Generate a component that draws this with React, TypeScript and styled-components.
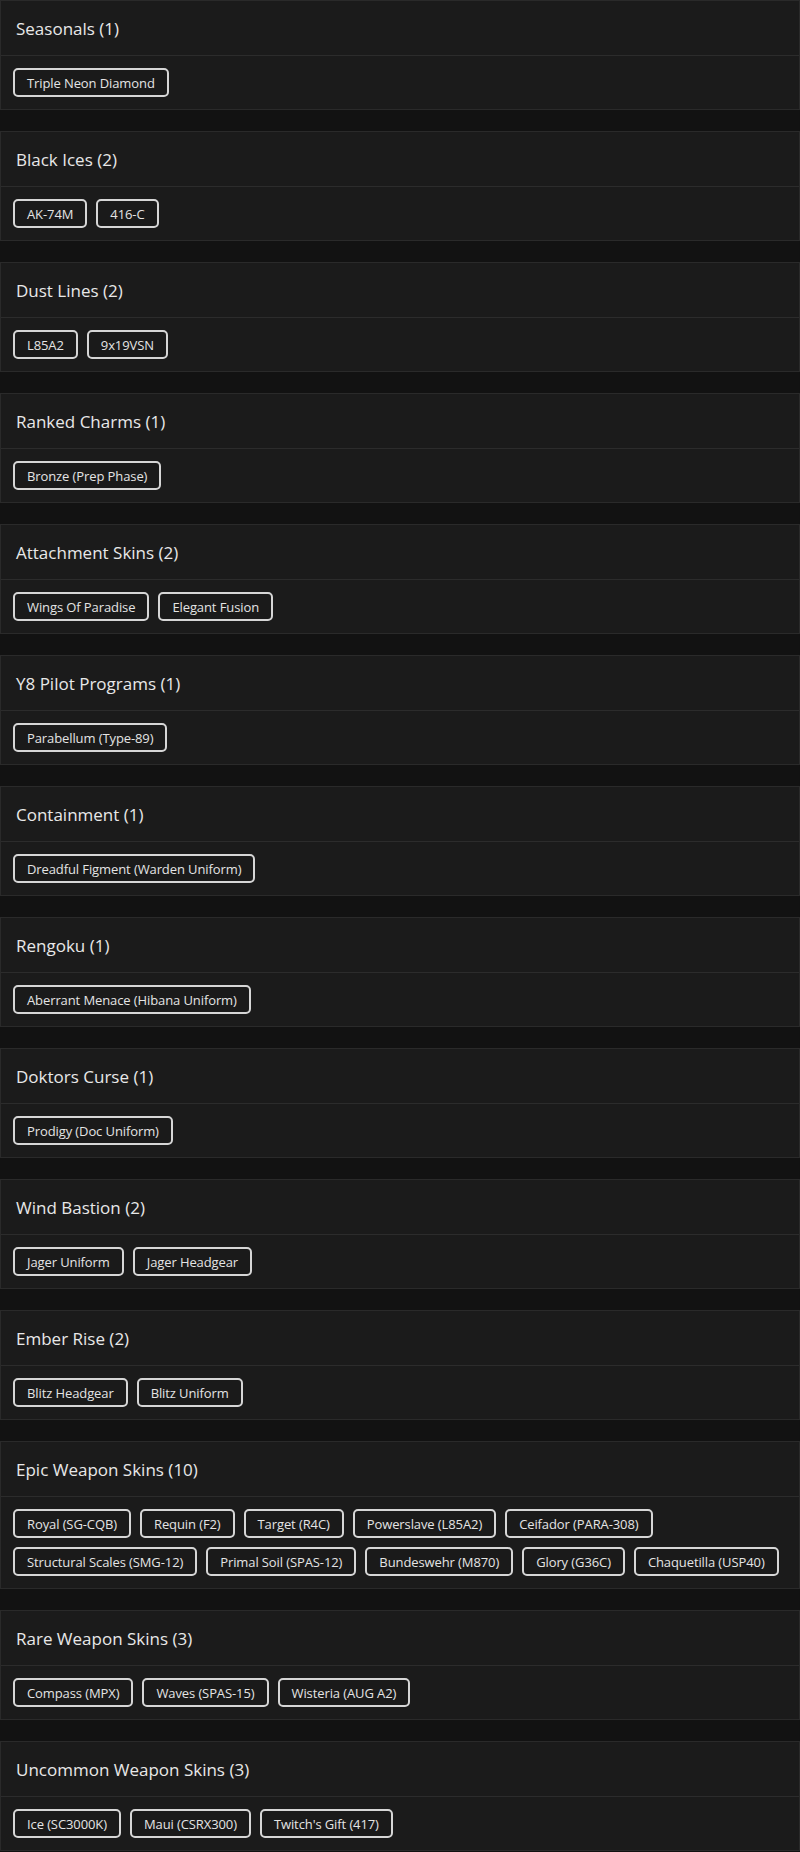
import React from "react";
import styled, { createGlobalStyle } from "styled-components";

const GlobalStyle = createGlobalStyle`
  html, body {
    margin: 0;
    padding: 0;
    background: #121212;
  }
  body {
    font-family: "Open Sans", "Liberation Sans", sans-serif;
    color: #e6e6e6;
  }
`;

const Page = styled.div`
  display: flex;
  flex-direction: column;
  gap: 21px;
  width: 800px;
`;

const Card = styled.section`
  background: #1b1b1b;
  border: 1px solid #2a2a2a;
`;

const CardHeader = styled.div`
  height: 54px;
  display: flex;
  align-items: center;
  padding: 0 15px;
  border-bottom: 1px solid #2c2c2c;
`;

const Title = styled.h3`
  margin: 0;
  font-size: 17px;
  font-weight: 500;
  color: #e8e8e8;
`;

const ChipList = styled.div`
  display: flex;
  flex-wrap: wrap;
  gap: 9px 9px;
  padding: 12px;
`;

const Chip = styled.span`
  display: inline-flex;
  align-items: center;
  height: 25px;
  padding: 0 12px;
  border: 2px solid #d6d6d6;
  border-radius: 5px;
  background: #1a1a1a;
  font-size: 13px;
  letter-spacing: -0.1px;
  color: #e4e4e4;
  white-space: nowrap;
`;

const groups: { name: string; items: string[] }[] = [
  { name: "Seasonals", items: ["Triple Neon Diamond"] },
  { name: "Black Ices", items: ["AK-74M", "416-C"] },
  { name: "Dust Lines", items: ["L85A2", "9x19VSN"] },
  { name: "Ranked Charms", items: ["Bronze (Prep Phase)"] },
  { name: "Attachment Skins", items: ["Wings Of Paradise", "Elegant Fusion"] },
  { name: "Y8 Pilot Programs", items: ["Parabellum (Type-89)"] },
  { name: "Containment", items: ["Dreadful Figment (Warden Uniform)"] },
  { name: "Rengoku", items: ["Aberrant Menace (Hibana Uniform)"] },
  { name: "Doktors Curse", items: ["Prodigy (Doc Uniform)"] },
  { name: "Wind Bastion", items: ["Jager Uniform", "Jager Headgear"] },
  { name: "Ember Rise", items: ["Blitz Headgear", "Blitz Uniform"] },
  {
    name: "Epic Weapon Skins",
    items: [
      "Royal (SG-CQB)",
      "Requin (F2)",
      "Target (R4C)",
      "Powerslave (L85A2)",
      "Ceifador (PARA-308)",
      "Structural Scales (SMG-12)",
      "Primal Soil (SPAS-12)",
      "Bundeswehr (M870)",
      "Glory (G36C)",
      "Chaquetilla (USP40)",
    ],
  },
  {
    name: "Rare Weapon Skins",
    items: ["Compass (MPX)", "Waves (SPAS-15)", "Wisteria (AUG A2)"],
  },
  {
    name: "Uncommon Weapon Skins",
    items: ["Ice (SC3000K)", "Maui (CSRX300)", "Twitch's Gift (417)"],
  },
];

export default function App() {
  return (
    <>
      <GlobalStyle />
      <Page>
        {groups.map((g) => (
          <Card key={g.name}>
            <CardHeader>
              <Title>
                {g.name} ({g.items.length})
              </Title>
            </CardHeader>
            <ChipList>
              {g.items.map((item) => (
                <Chip key={item}>{item}</Chip>
              ))}
            </ChipList>
          </Card>
        ))}
      </Page>
    </>
  );
}
